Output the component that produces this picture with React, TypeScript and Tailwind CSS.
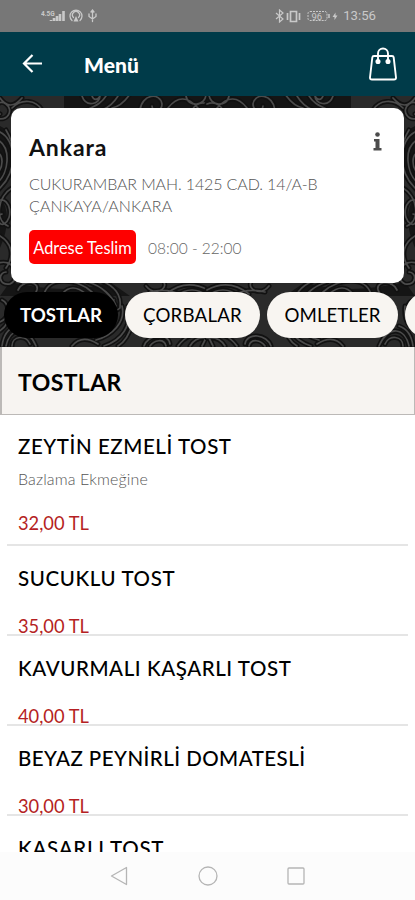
import { useId } from "react";

const darkAreas = [
  "M64 0h144v16H64z",
  "M0 30c18 8 22 40 0 66z",
  "M0 100q14 20 0 52z",
  "M10 186q60 14 100 0l20 14H0z",
];

const scrolls = [
  "M-4 22C8 26 14 14 6 8S-8 14 0 18M0 2q10 14 22 0M12 12C22 2 36 4 42 14",
  "M82 0c4 12 18 8 18 0M92 0c2 5 6 4 8 0M108 -4c-4 10-12 14-22 18M118 0q-6 10-16 14M130 -2q-8 12-18 14",
  "M140 14c2-16 20-18 22-6 0 8-10 8-10 2M168 12q14-18 30 0M186 0c2 12 20 10 20-2M192 14q6-10 16-6",
  "M0 36C16 44 18 74 0 92M-2 44c14 8 10 34 0 42M-4 56c8 2 8 16 0 22M6 34q10 16 6 34",
  "M12 92C-2 100-6 124 8 130M0 104c10-2 14 18 4 24-6 2-8-8-2-10M0 140c10 6 16 18 6 32",
  "M-4 168C14 160 22 182 10 188-2 190-2 176 6 176M12 158q-2 20 12 30",
  "M18 194C24 182 42 186 36 196M44 198C50 180 76 182 92 196M62 198q10-12 24 0M88 186c14 4 24 14 28 24M100 184c14 6 22 14 20 28-6 6-12-2-6-8",
  "M146 190c8 10 22 4 18-4M150 196c16-4 30 0 38 8M166 198q20-16 42-4M176 200q16-12 32 0",
  "M0 226c10-4 10-18 2-22M-2 236q14-8 12-26M2 250q2-16 14-20M12 250c0-10 14-12 18-2M6 250C10 232 26 228 36 250",
  "M96 244c16-4 30-18 26-34M104 250c18-6 28-20 24-40M118 250q10-6 14-22M72 250q10-12 26-2",
  "M144 250c4-12 24-14 26-2M150 250c4-6 14-8 16 0M178 250q10-14 30-14M190 250q6-10 18-8M202 250l6-12",
];

function Damask() {
  const id = useId();
  return (
    <svg className="absolute inset-0 h-full w-full" viewBox="0 0 415 251" aria-hidden="true">
      <defs>
        <g id={id + "half"} fill="none" strokeLinecap="round">
          {darkAreas.map((d) => (
            <path key={d} d={d} fill="#151515" />
          ))}
          {scrolls.map((d) => (
            <path key={d} d={d} stroke="#111111" strokeWidth="5" />
          ))}
          {scrolls.map((d) => (
            <path key={d} d={d} stroke="#4b4b4b" strokeWidth="1.7" />
          ))}
        </g>
      </defs>
      <rect width="415" height="251" fill="#2a2a2a" />
      <use href={`#${id}half`} />
      <use href={`#${id}half`} transform="translate(415 0) scale(-1 1)" />
    </svg>
  );
}

function StatusBar() {
  return (
    <div className="flex h-8 shrink-0 items-center bg-[#777] text-[#c9c9c9]">
      <div className="ml-[41px] flex items-center">
        <svg width="57" height="16" viewBox="0 0 57 16" fill="none" stroke="currentColor" strokeLinecap="round">
          <text x="0" y="7.500" fontSize="6.5" fontFamily="Roboto, sans-serif" fontWeight="700" fill="currentColor" stroke="none">4.5G</text>
          <path d="M10 13v-1M13 13v-3M16 13V8M19 13V6M22.500 13V3" strokeWidth="2.600" strokeLinecap="butt" />
          <path d="M31 12.500a6 6 0 1 1 8 0M32.500 9.500a3.500 3.500 0 1 1 5 0" strokeWidth="1.300" />
          <path d="M35 8l-2.500 5.500h5z" fill="currentColor" stroke="none" />
          <path d="M51.500 2.500v11M48 6v2.500l3.500 2.500L55 8.500V6M50 4l1.500-2L53 4" strokeWidth="1.300" />
        </svg>
      </div>
      <div className="ml-auto mr-[39px] flex items-center">
        <svg width="65" height="14" viewBox="0 0 65 14" fill="none" stroke="currentColor">
          <path d="M1 4l7 6-3.500 3V1L8 4l-7 6" strokeWidth="1.200" />
          <path d="M15.500 2.500h6v10h-6zM12.500 4v7M24.500 4v7" strokeWidth="1.700" />
          <rect x="33" y="2.500" width="19" height="9" rx="2" strokeDasharray="2 1" />
          <text x="36.500" y="10.500" fontSize="9.500" fontFamily="Roboto, sans-serif" fill="currentColor" stroke="none">96</text>
          <path d="M54 5v4" strokeWidth="1.500" />
          <path d="M60.500 3.500L57.500 8h2v3l3-4.500h-2z" fill="currentColor" stroke="none" />
        </svg>
        <span className="ml-[3px] font-[Roboto,sans-serif] text-[13.2px] leading-8">13:56</span>
      </div>
    </div>
  );
}

function AppBar() {
  return (
    <header className="flex h-16 shrink-0 items-center bg-[#003b49] text-white">
      <svg className="ml-[22px]" width="21" height="20" viewBox="0 0 21 20" fill="none" stroke="currentColor" strokeWidth="2.200">
        <path d="M20 9.500H2.500M10.500 1L2 9.500l8.500 8.500" />
      </svg>
      <h1 className="ml-[41px] pt-[2px] text-[21px] font-black tracking-[0.1px]">Menü</h1>
      <svg className="ml-auto mr-[18px]" width="28" height="34" viewBox="0 0 28 34" fill="none" stroke="currentColor" strokeWidth="1.900" strokeLinejoin="round">
        <path d="M5 9h18q1.500 0 1.700 1.500L27 30.500q.2 2-2 2H3q-2.200 0-2-2l2.300-20Q3.500 9 5 9z" />
        <path d="M9 14V6.500a5 5 0 0 1 10 0V14" />
        <circle cx="9" cy="14.500" r="1.600" fill="currentColor" />
        <circle cx="19" cy="14.500" r="1.600" fill="currentColor" />
      </svg>
    </header>
  );
}

const items = [
  { name: "ZEYTİN EZMELİ TOST", note: "Bazlama Ekmeğine", price: "32,00 TL", space: "tracking-[0.57px]" },
  { name: "SUCUKLU TOST", price: "35,00 TL", space: "tracking-[0.62px]" },
  { name: "KAVURMALI KAŞARLI TOST", price: "40,00 TL", space: "tracking-[0.57px]" },
  { name: "BEYAZ PEYNİRLİ DOMATESLİ", price: "30,00 TL", space: "tracking-[0.46px]" },
  { name: "KAŞARLI TOST", price: "", space: "tracking-[0.7px]" },
];

export default function App() {
  return (
    <div className="flex h-[900px] w-[415px] flex-col overflow-hidden bg-white font-[Lato,sans-serif] text-black">
      <StatusBar />
      <AppBar />
      <section className="relative h-[251px] shrink-0 overflow-hidden">
        <Damask />
        <div className="relative pt-3">
          <div className="ml-[11px] h-[175px] w-[393px] rounded-[10px] bg-white pl-[18px] pr-[22px] pt-[24px]">
            <div className="flex items-start justify-between">
              <h2 className="text-[23px] font-bold leading-[30px] tracking-[0.9px] text-[#111]">Ankara</h2>
              <svg width="9" height="19" viewBox="0 0 9 19" fill="#4c4c4c">
                <circle cx="4.500" cy="2.500" r="2.300" />
                <path d="M1 7h5.500v9H8.500v2.500H.5V16h2V9.500H1z" />
              </svg>
            </div>
            <p className="mt-[11px] whitespace-nowrap text-[16px] font-light leading-[22px] tracking-[-0.12px] text-[#555]">
              CUKURAMBAR MAH. 1425 CAD. 14/A-B
              <br />
              <span className="tracking-[0.13px]">ÇANKAYA/ANKARA</span>
            </p>
            <div className="mt-[13px] flex h-[34px] items-center">
              <span className="flex h-full w-[107px] items-center justify-center rounded-[5px] bg-[#fe0000] pt-[3px] text-[16.4px] text-white">Adrese Teslim</span>
              <span className="ml-3 pt-[4px] text-[15.5px] font-light text-[#666]">08:00 - 22:00</span>
            </div>
          </div>
          <nav className="mt-[9px] flex h-[46px] w-[520px] gap-[7px] pl-[4px] text-[18.7px]">
            <span className="flex w-[114px] items-center justify-center rounded-full bg-black font-bold text-white">TOSTLAR</span>
            <span className="flex w-[135px] items-center justify-center rounded-full bg-[#f8f5f1] tracking-[0.2px]">ÇORBALAR</span>
            <span className="flex w-[131px] items-center justify-center rounded-full bg-[#f8f5f1]">OMLETLER</span>
            <span className="w-[100px] rounded-full bg-[#f8f5f1]" />
          </nav>
        </div>
      </section>
      <div className="flex h-[68px] shrink-0 items-center border border-l-2 border-t-0 border-[#bcb9b7] bg-[#f7f4f1] pl-[16px] pt-[3px]">
        <h3 className="text-[23px] font-bold tracking-[0.4px]">TOSTLAR</h3>
      </div>
      <main className="h-[437px] shrink-0 overflow-hidden">
        {items.map((it, i) => (
          <article
            key={it.name}
            className={`ml-[7px] mr-[7px] flex flex-col border-b-2 border-[#e5e5e5] pl-[11px] ${i === 0 ? "h-[131px] pt-[16px]" : "h-[90px] pt-[17px]"}`}
          >
            <h4 className={`whitespace-nowrap text-[20.5px] font-medium leading-[30px] ${it.space}`}>{it.name}</h4>
            {it.note && <p className="mt-[7px] text-[16px] font-light leading-[22px] tracking-[0.12px] text-[#555]">{it.note}</p>}
            <p className={`mt-auto text-[18.3px] leading-[26px] text-[#b51f24] ${i === 0 ? "mb-[8px]" : "mb-[-5px]"}`}>{it.price}</p>
          </article>
        ))}
      </main>
      <div className="flex flex-1 items-start bg-[#fcfcfc] pl-[110px] pt-[14px]">
        <svg width="196" height="20" viewBox="0 0 196 20" fill="none" stroke="#b5b5b5" strokeWidth="1.300" strokeLinejoin="round">
          <path d="M16.500 1.500v17L1.500 10z" />
          <circle cx="98" cy="10" r="9" />
          <rect x="178" y="2" width="16" height="16" rx="1" />
        </svg>
      </div>
    </div>
  );
}
